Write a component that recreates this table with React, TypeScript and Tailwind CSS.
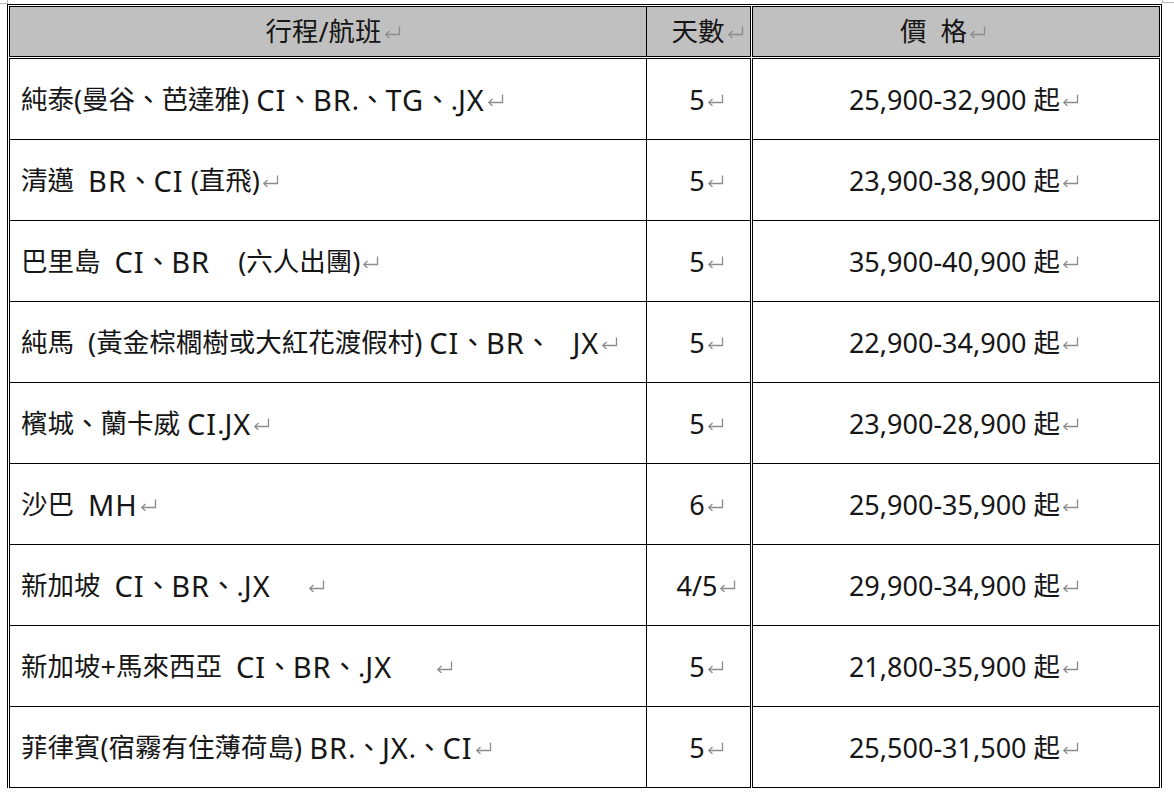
import React from "react";

type Row = {
  route: string;
  days: string;
  price: string;
};

const rows: Row[] = [
  { route: "純泰(曼谷、芭達雅) CI、BR.、TG、.JX", days: "5", price: "25,900-32,900 起" },
  { route: "清邁  BR、CI (直飛)", days: "5", price: "23,900-38,900 起" },
  { route: "巴里島  CI、BR    (六人出團)", days: "5", price: "35,900-40,900 起" },
  { route: "純馬  (黃金棕櫚樹或大紅花渡假村) CI、BR、   JX", days: "5", price: "22,900-34,900 起" },
  { route: "檳城、蘭卡威 CI.JX", days: "5", price: "23,900-28,900 起" },
  { route: "沙巴  MH", days: "6", price: "25,900-35,900 起" },
  { route: "新加坡  CI、BR、.JX     ", days: "4/5", price: "29,900-34,900 起" },
  { route: "新加坡+馬來西亞  CI、BR、.JX      ", days: "5", price: "21,800-35,900 起" },
  { route: "菲律賓(宿霧有住薄荷島) BR.、JX.、CI", days: "5", price: "25,500-31,500 起" },
];

// 中文、英文字母、數字各自用不同字級，模擬 Word 的混排
function Mixed({ text }: { text: string }) {
  const parts = text.match(/[\u3000-\u9fff\uff00-\uffef]+|[A-Z]+|[^\u3000-\u9fff\uff00-\uffefA-Z]+/g) ?? [];
  return (
    <>
      {parts.map((p, i) => {
        if (/[\u3000-\u9fff\uff00-\uffef]/.test(p)) {
          return (
            <span key={i} className="text-[26.5px]">
              {p}
            </span>
          );
        }
        if (/[A-Z]/.test(p)) {
          return (
            <span key={i} className="text-[29px] tracking-[1px]">
              {p}
            </span>
          );
        }
        return (
          <span key={i} className="text-[27px]">
            {p}
          </span>
        );
      })}
    </>
  );
}

// Word 的段落結束符號 ↵
function ReturnMark() {
  return (
    <svg
      width="17"
      height="13"
      viewBox="0 0 17 13"
      className="inline-block ml-[2px] shrink-0"
      fill="none"
      stroke="#8c8c8c"
      strokeWidth="1.3"
    >
      <path d="M15.5 1.5 V9.5 H2" />
      <path d="M5.5 6 L1.8 9.5 L5.5 13" />
    </svg>
  );
}

function Cell({
  children,
  className,
}: {
  children: React.ReactNode;
  className: string;
}) {
  return (
    <div className={`flex items-center border-black whitespace-pre ${className}`}>
      {children}
    </div>
  );
}

export default function App() {
  return (
    <div
      className="relative w-[1174px] h-[804px] bg-white text-[#161616] text-[25px] leading-none overflow-hidden"
      style={{ fontFamily: '"Noto Sans", "Noto Sans CJK TC", sans-serif' }}
    >
      <span className="absolute left-0 top-0 w-[8px] h-[4px] border-r border-b border-[#b8b8b8]" />
      <span className="absolute left-[1162px] top-0 w-[12px] h-[3px] border-l border-b border-[#b8b8b8]" />

      <div className="ml-[7px] mt-[4px] w-[1155px] border-l border-t border-r border-black p-[1px] pb-0">
        {/* 表頭 */}
        <div className="flex h-[51px]">
          <Cell className="w-[637px] border-l border-t border-b bg-[#c0c0c0] justify-center pl-[10px]">
            <Mixed text="行程/航班" />
            <ReturnMark />
          </Cell>
          <Cell className="w-[105px] border-l border-r border-t border-b bg-[#c0c0c0] justify-center pl-[18px]">
            <Mixed text="天數" />
            <ReturnMark />
          </Cell>
          <div className="w-[1px]" />
          <Cell className="w-[408px] border-l border-r border-t border-b bg-[#c0c0c0] justify-center pr-[26px]">
            <Mixed text="價  格" />
            <ReturnMark />
          </Cell>
        </div>

        <div className="mt-[1px]">
          {rows.map((row, i) => {
            const last = i === rows.length - 1;
            return (
              <div key={i} className={`flex ${last ? "h-[82px]" : "h-[81px]"}`}>
                <Cell className={`w-[637px] border-l border-t pl-[11px] ${last ? "border-b" : ""}`}>
                  <Mixed text={row.route} />
                  <ReturnMark />
                </Cell>
                <Cell
                  className={`w-[105px] border-l border-r border-t justify-center pl-[16px] ${last ? "border-b" : ""}`}
                >
                  <Mixed text={row.days} />
                  <ReturnMark />
                </Cell>
                <div className="w-[1px]" />
                <Cell
                  className={`w-[408px] border-l border-r border-t justify-center pl-[16px] ${last ? "border-b" : ""}`}
                >
                  <Mixed text={row.price} />
                  <ReturnMark />
                </Cell>
              </div>
            );
          })}
        </div>
      </div>
    </div>
  );
}
